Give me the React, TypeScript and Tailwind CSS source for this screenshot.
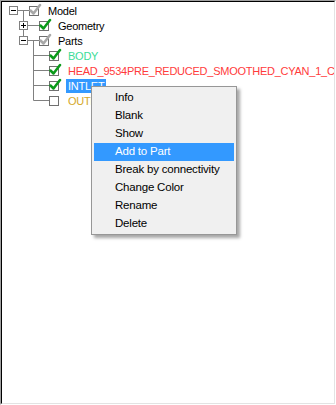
import type { ReactNode } from "react";

type Row = {
  label: string;
  level: number;
  check: "on" | "off" | "mixed";
  color: string;
  gutter: ReactNode;
  selected?: boolean;
};

const LINE = "#808080";

function Expander({ x, open }: { x: number; open: boolean }) {
  return (
    <g>
      <rect x={x + 0.5} y={3.5} width={8} height={8} fill="#fff" stroke={LINE} />
      <line x1={x + 2} y1={7.5} x2={x + 7} y2={7.5} stroke="#000" />
      {!open && <line x1={x + 4.5} y1={5} x2={x + 4.5} y2={10} stroke="#000" />}
    </g>
  );
}

function Check({ state }: { state: "on" | "off" | "mixed" }) {
  return (
    <svg width="14" height="15" viewBox="0 0 14 15" className="shrink-0">
      <rect x="0.5" y="3.5" width="9" height="9" fill="#fff" stroke="#707070" />
      {state !== "off" && (
        <path
          d="M1.5 7.5 L4.5 10.5 L11 2"
          fill="none"
          stroke={state === "on" ? "#0a9a1a" : "#a8a8a8"}
          strokeWidth="2.5"
          strokeLinecap="round"
          strokeLinejoin="round"
        />
      )}
    </svg>
  );
}

const rows: Row[] = [
  {
    label: "Model",
    level: 0,
    check: "mixed",
    color: "#000",
    gutter: (
      <>
        <line x1={16} y1={7.5} x2={27} y2={7.5} stroke={LINE} />
        <line x1={21.5} y1={7.5} x2={21.5} y2={15} stroke={LINE} />
        <Expander x={7} open />
      </>
    ),
  },
  {
    label: "Geometry",
    level: 1,
    check: "on",
    color: "#000",
    gutter: (
      <>
        <line x1={21.5} y1={0} x2={21.5} y2={15} stroke={LINE} />
        <line x1={26} y1={7.5} x2={37} y2={7.5} stroke={LINE} />
        <Expander x={17} open={false} />
      </>
    ),
  },
  {
    label: "Parts",
    level: 1,
    check: "mixed",
    color: "#000",
    gutter: (
      <>
        <line x1={21.5} y1={0} x2={21.5} y2={4} stroke={LINE} />
        <line x1={26} y1={7.5} x2={37} y2={7.5} stroke={LINE} />
        <line x1={31.5} y1={7.5} x2={31.5} y2={15} stroke={LINE} />
        <Expander x={17} open />
      </>
    ),
  },
  { label: "BODY", level: 2, check: "on", color: "#3ddc97", gutter: null },
  {
    label: "HEAD_9534PRE_REDUCED_SMOOTHED_CYAN_1_CUT",
    level: 2,
    check: "on",
    color: "#ff3b3b",
    gutter: null,
  },
  { label: "INTLET", level: 2, check: "on", color: "#fff", gutter: null, selected: true },
  { label: "OUTLET", level: 2, check: "off", color: "#d4a82a", gutter: null },
];

function leafGutter(last: boolean) {
  return (
    <>
      <line x1={31.5} y1={0} x2={31.5} y2={last ? 7.5 : 15} stroke={LINE} />
      <line x1={31.5} y1={7.5} x2={47} y2={7.5} stroke={LINE} />
    </>
  );
}

const menuItems = [
  "Info",
  "Blank",
  "Show",
  "Add to Part",
  "Break by connectivity",
  "Change Color",
  "Rename",
  "Delete",
];

export default function App() {
  return (
    <div className="relative h-[405px] w-[336px] border border-t-[#a0a0a0] border-l-[#a0a0a0] border-r-white border-b-white bg-white font-['Liberation_Sans',Arial,sans-serif]">
      <div className="h-full w-full overflow-hidden border border-t-black border-l-black border-r-[#e3e3e3] border-b-[#e3e3e3] bg-white">
        <div className="flex flex-col pt-[1px]">
          {rows.map((r, i) => {
            const gw = 27 + r.level * 10;
            return (
              <div key={r.label} className="flex h-[15px] items-center whitespace-nowrap">
                <svg width={gw} height={15} className="shrink-0">
                  {r.gutter ?? leafGutter(i === rows.length - 1)}
                </svg>
                <Check state={r.check} />
                <span
                  className={
                    "ml-[3px] px-[2px] pt-[1px] text-[11px] leading-[13px] tracking-[-0.25px] " +
                    (r.selected ? "bg-[#3399ff]" : "")
                  }
                  style={{ color: r.color }}
                >
                  {r.label}
                </span>
              </div>
            );
          })}
        </div>
      </div>

      {/* context menu */}
      <div className="absolute left-[90px] top-[85px] w-[146px] border border-[#979797] bg-[#f0f0f0] px-[2px] pb-[1px] pt-[2px] shadow-[3px_3px_3px_rgba(0,0,0,0.35)]">
        {menuItems.map((m) => (
          <div
            key={m}
            className={
              "flex h-[18px] items-center pl-[21px] text-[11.5px] tracking-[-0.2px] " +
              (m === "Add to Part" ? "bg-[#3399ff] text-white" : "text-black")
            }
          >
            {m}
          </div>
        ))}
      </div>
    </div>
  );
}
